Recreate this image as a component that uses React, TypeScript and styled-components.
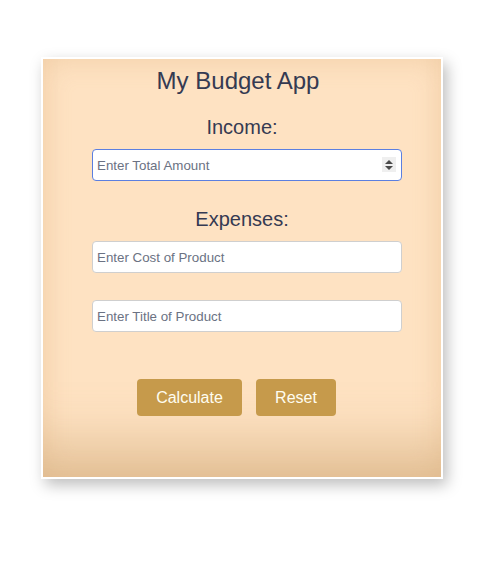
import styled, { createGlobalStyle } from "styled-components";

const GlobalStyle = createGlobalStyle`
  body {
    margin: 0;
    background: #ffffff;
    font-family: "Liberation Sans", Arial, sans-serif;
  }
`;

const Page = styled.div`
  width: 497px;
  height: 562px;
  padding: 57px 0 0 41px;
  box-sizing: border-box;
`;

/** 予算アプリのカード本体 */
const Card = styled.div`
  width: 402px;
  height: 422px;
  box-sizing: border-box;
  border: 2px solid #ffffff;
  background-color: #fee2c2;
  box-shadow: inset 0 -80px 50px -45px rgba(205, 165, 115, 0.5),
    inset 0 0 28px rgba(215, 165, 110, 0.32), 4px 6px 14px rgba(0, 0, 0, 0.26);
  display: flex;
  flex-direction: column;
`;

const Title = styled.h1`
  margin: 8px 8px 0 0;
  font-size: 24px;
  line-height: 28px;
  font-weight: normal;
  text-align: center;
  color: #353a52;
`;

const Heading = styled.h2<{ $top: number }>`
  margin: ${(p) => p.$top}px 0 0;
  font-size: 20px;
  line-height: 24px;
  font-weight: normal;
  text-align: center;
  color: #353a52;
`;

const Field = styled.div<{ $top: number }>`
  position: relative;
  margin: ${(p) => p.$top}px 0 0 49px;
  width: 310px;
  height: 32px;
`;

const Input = styled.input<{ $focused?: boolean }>`
  width: 100%;
  height: 100%;
  box-sizing: border-box;
  border: 1px solid ${(p) => (p.$focused ? "#5b7fe0" : "#cfcfcf")};
  border-radius: 4px;
  background: #ffffff;
  padding: 0 4px;
  font-family: "Liberation Sans", Arial, sans-serif;
  font-size: 13.33px;
  color: #333;
  outline: none;
  &::placeholder {
    color: #6b7283;
  }
  &::-webkit-inner-spin-button,
  &::-webkit-outer-spin-button {
    -webkit-appearance: none;
    margin: 0;
  }
`;

const Spinner = styled.div`
  position: absolute;
  right: 6px;
  top: 8px;
  width: 14px;
  height: 15px;
  background: #efefef;
  display: flex;
  align-items: center;
  justify-content: center;
`;

const ButtonRow = styled.div`
  margin: 47px 11px 0 0;
  display: flex;
  justify-content: center;
  gap: 14px;
`;

const Button = styled.button<{ $width: number }>`
  width: ${(p) => p.$width}px;
  height: 37px;
  border: none;
  border-radius: 4px;
  background: #c69a4b;
  color: #fffdf0;
  font-family: "Liberation Sans", Arial, sans-serif;
  font-size: 16px;
  cursor: pointer;
`;

export default function App() {
  return (
    <>
      <GlobalStyle />
      <Page>
        <Card>
          <Title>My Budget App</Title>
          <Heading $top={20}>Income:</Heading>
          <Field $top={10}>
            <Input type="number" placeholder="Enter Total Amount" $focused />
            <Spinner>
              <svg width="10" height="12" viewBox="0 0 10 12">
                <path d="M5 1 L9 5 L1 5 Z" fill="#4a4a4a" />
                <path d="M5 11 L9 7 L1 7 Z" fill="#4a4a4a" />
              </svg>
            </Spinner>
          </Field>
          <Heading $top={26}>Expenses:</Heading>
          <Field $top={10}>
            <Input type="text" placeholder="Enter Cost of Product" />
          </Field>
          <Field $top={27}>
            <Input type="text" placeholder="Enter Title of Product" />
          </Field>
          <ButtonRow>
            <Button $width={105}>Calculate</Button>
            <Button $width={80}>Reset</Button>
          </ButtonRow>
        </Card>
      </Page>
    </>
  );
}
